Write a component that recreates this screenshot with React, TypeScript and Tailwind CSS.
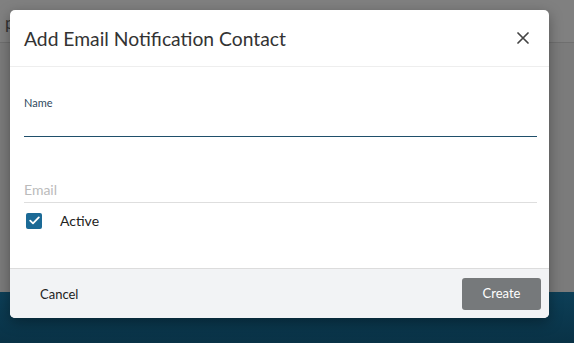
import React from "react";

export default function App() {
  return (
    <div
      className="relative w-[574px] h-[343px] overflow-hidden"
      style={{ fontFamily: "Lato, 'Open Sans', sans-serif" }}
    >
      {/* background page (dimmed) */}
      <div className="flex flex-col w-full h-full bg-[#7b7b7b]">
        <div className="h-[43px] bg-[#808080] border-b border-[#6f6f6f] px-[5px] pt-[10px] text-[17px] text-[#333]">
          p
        </div>
        <div className="flex-1" />
        <div className="h-[51px] bg-gradient-to-b from-[#0d3f57] to-[#093246]" />
      </div>

      {/* dialog */}
      <div className="absolute left-[10px] top-[10px] w-[539px] h-[308px] bg-white rounded-[5px] shadow-[0_4px_14px_rgba(0,0,0,0.35)] flex flex-col overflow-hidden">
        <div className="h-[57px] border-b border-[#eeeeee] flex items-center justify-between pl-[14px] pr-[20px] pt-[2px]">
          <span className="text-[19.3px] text-[#333333]">
            Add Email Notification Contact
          </span>
          <svg width="12" height="12" viewBox="0 0 12 12" className="mb-[2px]">
            <path d="M1 1 L11 11 M11 1 L1 11" stroke="#444" strokeWidth="1.7" strokeLinecap="round" />
          </svg>
        </div>

        <div className="flex-1 flex flex-col px-[14px] pr-[12px]">
          <div className="pt-[29px] text-[11px] text-[#2f4a5e] leading-[14px]">Name</div>
          <div className="mt-[26px] h-[1px] bg-[#1f4f6b]" />
          <div className="mt-[44px] text-[14px] text-[#bbbbbb] leading-[18px]">Email</div>
          <div className="mt-[3px] h-[1px] bg-[#dedede]" />
          <div className="mt-[7px] flex items-center">
            <div className="ml-[2px] w-[16px] h-[16px] rounded-[2px] bg-[#1b6a96] flex items-center justify-center">
              <svg width="11" height="9" viewBox="0 0 11 9">
                <path d="M1.2 4.6 L4 7.3 L9.8 1.4" stroke="white" strokeWidth="1.8" fill="none" strokeLinecap="round" strokeLinejoin="round" />
              </svg>
            </div>
            <span className="ml-[18px] text-[14px] text-[#222222]">Active</span>
          </div>
        </div>

        <div className="h-[50px] bg-[#f2f3f5] border-t border-[#dcdcdc] flex items-center justify-between pl-[30px] pr-[8px]">
          <span className="text-[13px] text-[#222222] pt-[2px]">Cancel</span>
          <button className="w-[79px] h-[32px] rounded-[3px] bg-[#76797b] text-white text-[13px] pt-[1px]">
            Create
          </button>
        </div>
      </div>
    </div>
  );
}
